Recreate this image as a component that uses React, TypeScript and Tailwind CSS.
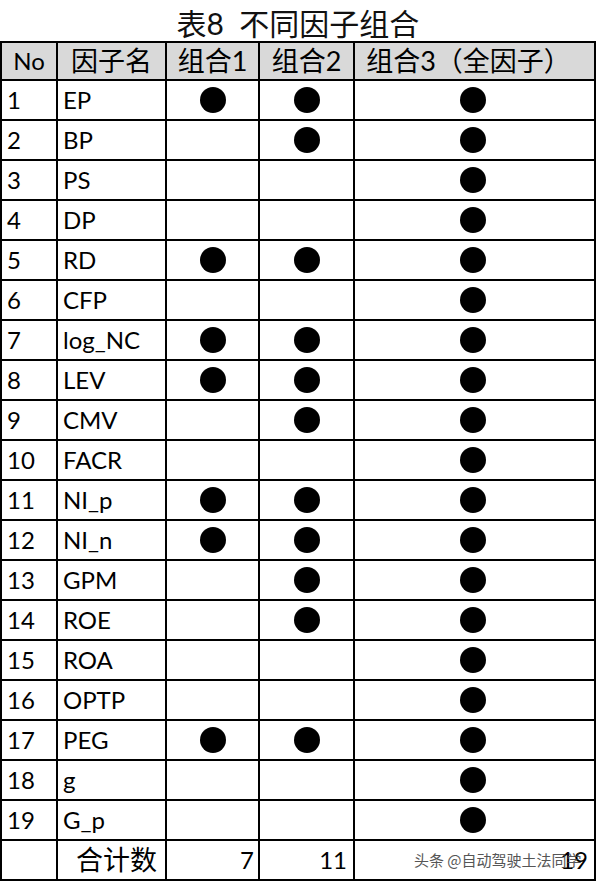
import React from "react";

const rows: [string, number, number][] = [
  ["EP", 1, 1],
  ["BP", 0, 1],
  ["PS", 0, 0],
  ["DP", 0, 0],
  ["RD", 1, 1],
  ["CFP", 0, 0],
  ["log_NC", 1, 1],
  ["LEV", 1, 1],
  ["CMV", 0, 1],
  ["FACR", 0, 0],
  ["NI_p", 1, 1],
  ["NI_n", 1, 1],
  ["GPM", 0, 1],
  ["ROE", 0, 1],
  ["ROA", 0, 0],
  ["OPTP", 0, 0],
  ["PEG", 1, 1],
  ["g", 0, 0],
  ["G_p", 0, 0],
];

const latin = { fontFamily: "Lato, 'Noto Sans CJK SC', sans-serif" };

function Dot() {
  return <div className="w-[26px] h-[26px] rounded-full bg-black" />;
}

export default function App() {
  return (
    <div className="w-[596px] h-[882px] bg-white overflow-hidden text-black" style={latin}>
      <div className="h-[41px] flex items-center justify-center text-[30px] leading-none text-[#111]">
        <span className="mt-[5px]">表8&nbsp;&nbsp;不同因子组合</span>
      </div>
      <div className="grid grid-cols-[54px_107px_91px_93px_239px] grid-rows-[36px] auto-rows-[38px] gap-[2px] p-[2px] bg-black w-[596px]">
        <div className="bg-[#d9d9d9] flex items-center justify-center text-[24px]">No</div>
        <div className="bg-[#d9d9d9] flex items-center justify-center text-[27px]">因子名</div>
        <div className="bg-[#d9d9d9] flex items-center justify-center text-[27px]">组合1</div>
        <div className="bg-[#d9d9d9] flex items-center justify-center text-[27px]">组合2</div>
        <div className="bg-[#d9d9d9] flex items-center justify-center text-[27px] pr-[12px]">组合3（全因子）</div>
        {rows.map(([name, a, b], i) => (
          <React.Fragment key={name}>
            <div className="bg-white flex items-center pl-[5px] text-[24px]">{i + 1}</div>
            <div className="bg-white flex items-center pl-[5px] text-[24px]">{name}</div>
            <div className="bg-white flex items-center justify-center">{a ? <Dot /> : null}</div>
            <div className="bg-white flex items-center justify-center">{b ? <Dot /> : null}</div>
            <div className="bg-white flex items-center justify-center pr-[4px]"><Dot /></div>
          </React.Fragment>
        ))}
        <div className="bg-white" />
        <div className="bg-white flex items-center justify-end pr-[8px] text-[27px]">合计数</div>
        <div className="bg-white flex items-center justify-end pr-[4px] text-[24px]">7</div>
        <div className="bg-white flex items-center justify-end pr-[6px] text-[24px]">11</div>
        <div className="bg-white relative flex items-center justify-end pr-[6px] text-[24px]">
          19
          <span
            className="absolute left-[59px] top-[11px] text-[15px] leading-none text-[#444] opacity-90 whitespace-nowrap"
            style={{ fontFamily: "'Noto Sans CJK SC', sans-serif" }}
          >
            头条 @自动驾驶土法同学
          </span>
        </div>
      </div>
    </div>
  );
}
